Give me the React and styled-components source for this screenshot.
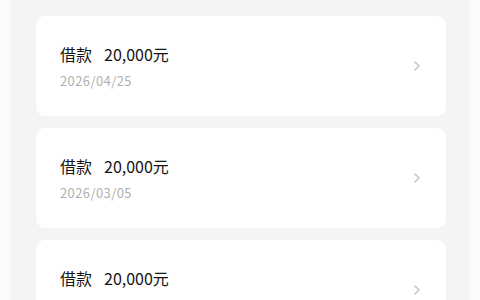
import React from "react";
import styled, { createGlobalStyle } from "styled-components";

const Global = createGlobalStyle`
  html, body { margin: 0; padding: 0; background: #fbfbfb; }
  body { font-family: "Noto Sans CJK SC", "Noto Sans", sans-serif; }
`;

const Page = styled.div`
  width: 480px;
  height: 300px;
  overflow: hidden;
  padding: 0 10px;
  box-sizing: border-box;
  background: #fbfbfb;
`;

const Panel = styled.div`
  height: 100%;
  background: #f3f4f6;
  padding: 16px 24px 0 26px;
  box-sizing: border-box;
  display: flex;
  flex-direction: column;
  gap: 12px;
`;

const Card = styled.div`
  flex: none;
  height: 100px;
  background: #ffffff;
  border-radius: 9px;
  display: flex;
  align-items: center;
  padding: 0 24px;
  box-sizing: border-box;
`;

const Info = styled.div`
  flex: 1;
  display: flex;
  flex-direction: column;
  gap: 7px;
`;

const Title = styled.div`
  font-size: 16px;
  line-height: 22px;
  color: #151515;
  font-weight: 400;
  display: flex;
  gap: 12px;
`;

const DateText = styled.div`
  font-size: 13px;
  line-height: 18px;
  color: #b0b0b0;
  letter-spacing: 0.4px;
`;

const Chevron = () => (
  <svg width="10" height="12" viewBox="0 0 10 12" fill="none">
    <path d="M3 2 L7 6 L3 10" stroke="#c6c6c6" strokeWidth="1.6" strokeLinecap="round" strokeLinejoin="round" />
  </svg>
);

const items = [
  { amount: "20,000元", date: "2026/04/25" },
  { amount: "20,000元", date: "2026/03/05" },
  { amount: "20,000元", date: "2026/02/05" },
];

export default function App() {
  return (
    <Page>
      <Global />
      <Panel>
        {items.map((it, i) => (
          <Card key={i}>
            <Info>
              <Title>
                <span>借款</span>
                <span>{it.amount}</span>
              </Title>
              <DateText>{it.date}</DateText>
            </Info>
            <Chevron />
          </Card>
        ))}
      </Panel>
    </Page>
  );
}
